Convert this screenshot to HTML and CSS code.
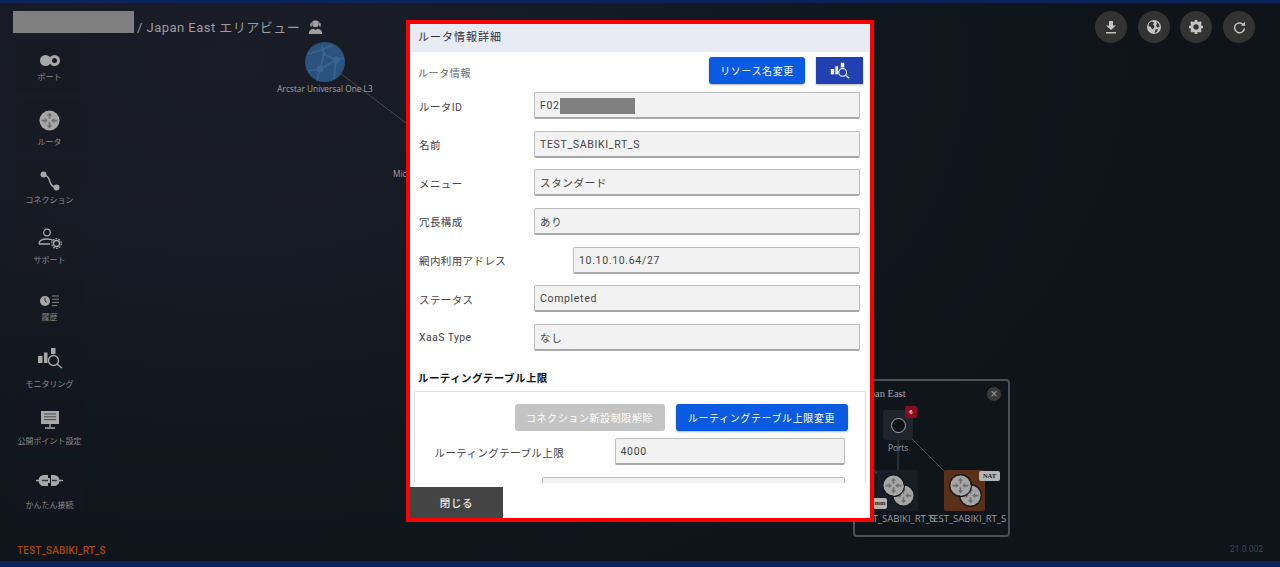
FILE: index.html
```html
<!DOCTYPE html>
<html lang="ja">
<head>
<meta charset="utf-8">
<title>Japan East エリアビュー</title>
<link rel="stylesheet" href="styles.css">
</head>
<body>
<svg class="defs" width="0" height="0" aria-hidden="true">
  <symbol id="router" viewBox="0 0 24 24">
    <circle cx="12" cy="12" r="11.5" fill="#a6a6a6"/>
    <g fill="#6f6f6f">
      <path d="M12 3l3 3.5h-2v3.5h-2V6.500H9z"/>
      <path d="M12 21l-3-3.500h2V14h2v3.500h2z"/>
      <path d="M10 12L6.500 9v2H3v2h3.500v2z"/>
      <path d="M14 12l3.500-3v2H21v2h-3.500v2z"/>
    </g>
  </symbol>
  <symbol id="monitor" viewBox="0 0 26 22">
    <rect x="1" y="9" width="4.500" height="7" fill="currentColor"/>
    <rect x="7" y="5.500" width="3.500" height="10.500" fill="currentColor"/>
    <rect x="14" y="1" width="4.500" height="6" fill="currentColor"/>
    <circle cx="16.500" cy="13.500" r="5" fill="none" stroke="currentColor" stroke-width="1.400"/>
    <path d="M20 17l5 4" stroke="currentColor" stroke-width="1.500"/>
  </symbol>
</svg>
<div class="topbar"></div>
<main class="stage">
  <div class="diagram">
    <svg class="links" width="1280" height="558" viewBox="0 0 1280 558">
      <path d="M340 70L406 120" stroke="#4a4a44" fill="none"/>
    </svg>
    <div class="cloud">
      <svg width="40" height="40" viewBox="0 0 40 40">
        <circle cx="20" cy="20" r="20" fill="#2b537e"/>
        <g stroke="#386592" stroke-width="1.600" fill="none">
          <path d="M3 12C12 10 20 7 28 3M15 27L19 12L31 18L15 27ZM15 27L12 39M31 18L39 16M19 12L17 3M31 18L29 37M3 29L15 27"/>
        </g>
        <g fill="#386592"><circle cx="15" cy="27" r="3.500"/><circle cx="31" cy="18" r="3.500"/><circle cx="19" cy="12" r="2"/></g>
      </svg>
      <span class="cloud-label">Arcstar Universal One L3</span>
    </div>
    <span class="ms-label">Microsoft Azure</span>

    <section class="minimap">
      <svg class="mini-links" width="156" height="157" viewBox="0 0 156 157">
        <path d="M45 59V100M52 53L106 107M20 89L38 110M14 84L36 108" stroke="#464b51" fill="none"/>
      </svg>
      <span class="mini-title">Japan East</span>
      <span class="mini-close">×</span>
      <div class="mini-ports"><i></i></div>
      <span class="mini-badge">6</span>
      <span class="mini-ports-label">Ports</span>
      <div class="mini-tile mini-tile-a"></div>
      <div class="mini-tile mini-tile-b"></div>
      <svg class="rt rt-a2"><use href="#router"/></svg>
      <svg class="rt rt-a1"><use href="#router"/></svg>
      <svg class="rt rt-b2"><use href="#router"/></svg>
      <svg class="rt rt-b1"><use href="#router"/></svg>
      <span class="tag tag-a">mm</span>
      <span class="tag tag-b">NAT</span>
      <span class="mini-label mini-label-a">TEST_SABIKI_RT_S</span>
      <span class="mini-label mini-label-b">TEST_SABIKI_RT_S</span>
    </section>
  </div>

  <header class="head">
    <div class="crumb">
      <span class="crumb-mask"></span>
      <h1 class="crumb-text">/ Japan East エリアビュー</h1>
      <svg class="crumb-icon" width="15" height="15" viewBox="0 0 15 15">
        <circle cx="7.500" cy="5" r="3.300" fill="#a0a0a0"/>
        <path d="M3 6C2.400 .6 12.600 .6 12 6" fill="none" stroke="#a0a0a0" stroke-width="1"/>
        <rect x="2.300" y="4.500" width="1.500" height="3" fill="#a0a0a0"/>
        <rect x="11.200" y="4.500" width="1.500" height="3" fill="#a0a0a0"/>
        <path d="M.8 15c0-3 1.500-5 4.700-5.200L7.500 11l2-1.200c3.200.2 4.700 2.200 4.700 5.200z" fill="#a0a0a0"/>
      </svg>
    </div>
    <div class="tools">
      <button class="tool" type="button" aria-label="ダウンロード">
        <svg width="14" height="14" viewBox="0 0 14 14"><path d="M5 1h4v4.500h3L7 10 2 5.500h3zM2 12h10v1.600H2z" fill="#c4c4c4"/></svg>
      </button>
      <button class="tool" type="button" aria-label="エリア">
        <svg width="16" height="16" viewBox="0 0 16 16"><circle cx="8" cy="8" r="7" fill="#c4c4c4"/><path d="M3 4l3-1.500 2 1-1 2 1.500 1.500-1 2.500-1.500 1L5 8 2.500 7zM10 2.500l3 2.500.5 3-2 .5-1.500-2 1-1.500zM9.500 10.500l2.500-.5-1 3-2.500 1z" fill="#333"/></svg>
      </button>
      <button class="tool" type="button" aria-label="設定">
        <svg width="16" height="16" viewBox="0 0 16 16"><circle cx="8" cy="8" r="4.200" fill="none" stroke="#c4c4c4" stroke-width="3"/><path d="M8 1v14M1 8h14M3 3l10 10M13 3L3 13" stroke="#c4c4c4" stroke-width="2.600" stroke-dasharray="2.600 8.800 2.600"/></svg>
      </button>
      <button class="tool" type="button" aria-label="更新">
        <svg width="13" height="13" viewBox="0 0 14 14"><path d="M11.500 4.500A5.300 5.300 0 1 0 12.300 8" fill="none" stroke="#c4c4c4" stroke-width="1.600"/><path d="M8.500 5h4.500V.7z" fill="#c4c4c4"/></svg>
      </button>
    </div>
  </header>

  <nav class="side">
    <a class="tile tile-port">
      <span class="tile-icon"><svg width="20" height="11" viewBox="0 0 20 11"><circle cx="5.500" cy="5.500" r="5.500" fill="#a8a8a8"/><circle cx="14.500" cy="5.500" r="4" fill="none" stroke="#a8a8a8" stroke-width="3"/></svg></span>
      <span class="tile-label">ポート</span>
    </a>
    <a class="tile tile-router">
      <span class="tile-icon"><svg width="21" height="21"><use href="#router"/></svg></span>
      <span class="tile-label">ルータ</span>
    </a>
    <a class="tile tile-conn">
      <span class="tile-icon"><svg width="20" height="20" viewBox="0 0 20 20"><circle cx="3.500" cy="3.500" r="3" fill="#a8a8a8"/><circle cx="16.500" cy="16.500" r="3" fill="#a8a8a8"/><path d="M4 4c5 1 5 4 6 7s3 5 6 5" fill="none" stroke="#a8a8a8" stroke-width="1.500"/></svg></span>
      <span class="tile-label">コネクション</span>
    </a>
    <a class="tile tile-support">
      <span class="tile-icon"><svg width="24" height="21" viewBox="0 0 24 21"><circle cx="9" cy="4.500" r="3.300" fill="none" stroke="#a8a8a8" stroke-width="1.200"/><path d="M1 16c0-3 3-5 8-5 3 0 5 .6 6 1.500M1 16h11" fill="none" stroke="#a8a8a8" stroke-width="1.300"/><circle cx="18.500" cy="15.500" r="3" fill="none" stroke="#a8a8a8" stroke-width="1.300"/><circle cx="18.500" cy="15.500" r="4.800" fill="none" stroke="#a8a8a8" stroke-width="1.200" stroke-dasharray="1.800 1.200"/></svg></span>
      <span class="tile-label">サポート</span>
    </a>
    <a class="tile tile-history">
      <span class="tile-icon"><svg width="20" height="12" viewBox="0 0 20 12"><circle cx="5" cy="6" r="5" fill="#a8a8a8"/><path d="M5 2.500V6l2 1.500" fill="none" stroke="#20242c"/><path d="M12 1h7M12 4.200h7M12 7.400h7M12 10.600h5" stroke="#888" stroke-width="1"/></svg></span>
      <span class="tile-label">履歴</span>
    </a>
    <a class="tile tile-monitor">
      <span class="tile-icon"><svg class="mon-side" width="26" height="22"><use href="#monitor"/></svg></span>
      <span class="tile-label">モニタリング</span>
    </a>
    <a class="tile tile-public">
      <span class="tile-icon"><svg width="20" height="19" viewBox="0 0 20 19"><path d="M1 1h18v13H1z" fill="#a8a8a8"/><path d="M4 4h12M4 6.800h12M4 9.600h12" stroke="#4a4a4a"/><path d="M10 14v3M5 18h10" stroke="#a8a8a8" stroke-width="1.400"/></svg></span>
      <span class="tile-label">公開ポイント設定</span>
    </a>
    <a class="tile tile-easy">
      <span class="tile-icon"><svg width="27" height="13" viewBox="0 0 27 13"><path d="M0 6.500h4M23 6.500h4" stroke="#a8a8a8" stroke-width="1.600"/><path d="M12 1H8a5.500 5.500 0 0 0 0 11h4v-3h2V4h-2zM15 1h3a5.500 5.500 0 0 1 0 11h-3z" fill="#a8a8a8"/><path d="M6 6.500h6M16 6.500h5" stroke="#33363e" stroke-width="1.400"/></svg></span>
      <span class="tile-label">かんたん接続</span>
    </a>
  </nav>

  <footer class="foot">
    <span class="selected">TEST_SABIKI_RT_S</span>
    <span class="version">21.0.002</span>
  </footer>

  <div class="modal" role="dialog" aria-label="ルータ情報詳細">
    <h2 class="modal-title">ルータ情報詳細</h2>
    <div class="modal-body">
      <div class="action-row">
        <span class="action-label">ルータ情報</span>
        <button class="btn btn-primary btn-rename" type="button">リソース名変更</button>
        <button class="btn btn-icon" type="button" aria-label="モニタリング"><svg width="20" height="17"><use href="#monitor"/></svg></button>
      </div>
      <div class="field"><label class="field-label">ルータID</label><div class="field-value">F02<span class="mask"></span></div></div>
      <div class="field"><label class="field-label">名前</label><div class="field-value">TEST_SABIKI_RT_S</div></div>
      <div class="field"><label class="field-label">メニュー</label><div class="field-value">スタンダード</div></div>
      <div class="field"><label class="field-label">冗長構成</label><div class="field-value">あり</div></div>
      <div class="field field-wide"><label class="field-label">網内利用アドレス</label><div class="field-value">10.10.10.64/27</div></div>
      <div class="field"><label class="field-label">ステータス</label><div class="field-value">Completed</div></div>
      <div class="field"><label class="field-label">XaaS Type</label><div class="field-value">なし</div></div>
      <h3 class="section-title">ルーティングテーブル上限</h3>
      <div class="section-box">
        <div class="section-actions">
          <button class="btn btn-disabled" type="button">コネクション新設制限解除</button>
          <button class="btn btn-primary btn-limit" type="button">ルーティングテーブル上限変更</button>
        </div>
        <div class="field field-limit"><label class="field-label">ルーティングテーブル上限</label><div class="field-value">4000</div></div>
        <div class="field field-next"><label class="field-label"></label><div class="field-value"></div></div>
      </div>
    </div>
    <div class="modal-foot"><button class="btn-close" type="button">閉じる</button></div>
  </div>
</main>
<div class="bottombar"></div>
</body>
</html>
```

FILE: styles.css
```css
* { box-sizing: border-box; }
html, body { height: 100%; }
body {
  margin: 0;
  display: flex;
  flex-direction: column;
  overflow: hidden;
  background: #0e141a;
  font-family: Roboto, "Noto Sans CJK JP", sans-serif;
  color: #333;
}
.defs { position: absolute; }
.topbar { height: 3px; background: #0a2358; flex: none; }
.bottombar { height: 6px; background: #0a2358; flex: none; }
.stage {
  flex: 1;
  position: relative;
  display: flex;
  flex-direction: column;
  min-height: 0;
  padding-top: 8px;
  background:
    radial-gradient(ellipse 900px 560px at 230px 60px, #1a1d28 0%, #161a24 35%, #12181f 60%, #0e141a 100%),
    #0e141a;
}

/* header */
.head {
  height: 28px;
  display: flex;
  justify-content: space-between;
  align-items: flex-start;
  padding: 0 25px 0 13px;
}
.crumb { display: flex; align-items: center; height: 22px; position: relative; z-index: 1; }
.crumb-mask { width: 121px; height: 22px; background: #808080; }
.crumb-text {
  margin: 8px 0 0 3px;
  font-size: 13px;
  font-weight: 400;
  letter-spacing: .47px;
  color: #9c9c9c;
  white-space: nowrap;
}
.crumb-icon { margin: 8px 0 0 8px; }
.tools { display: flex; gap: 10.67px; position: relative; z-index: 1; }
.tool {
  width: 32px;
  height: 32px;
  padding: 0;
  border: 0;
  border-radius: 50%;
  background: #333;
  display: flex;
  align-items: center;
  justify-content: center;
}

/* sidebar */
.side {
  width: 67px;
  margin-left: 16px;
  display: flex;
  flex-direction: column;
  gap: 7px;
  position: relative;
  z-index: 1;
}
.tile {
  height: 53px;
  padding-top: 6px;
  display: flex;
  flex-direction: column;
  align-items: center;
  background: #181a23;
  border-radius: 2px;
  color: #8a8a8a;
}
.tile-icon { height: 31px; display: flex; align-items: center; justify-content: center; flex: none; }
.tile-label { font-size: 8px; line-height: 10px; white-space: nowrap; letter-spacing: 0; }
.tile-port .tile-label, .tile-history .tile-label { margin-top: -3px; }
.tile-router .tile-label { margin-top: 2px; }
.tile-monitor .tile-label { margin-top: 4px; }
.tile-public .tile-label { margin-top: 1px; }
.tile-easy .tile-label { margin-top: 5px; }
.tile-history { background: #141821; }
.tile-monitor { background: #13171f; }
.tile-public { background: #13161e; }
.tile-easy { background: #13161e; }
.tile-support .tile-icon { transform: translateY(-2px); }
.tile-monitor .tile-icon { transform: translateY(-3px); }
.tile-public .tile-icon { transform: translateY(-1px); }
.mon-side { color: #a8a8a8; }

/* footer */
.foot {
  margin-top: auto;
  height: 17px;
  padding: 0 17px;
  display: flex;
  justify-content: space-between;
  align-items: flex-start;
}
.selected { font-size: 10px; font-weight: 500; line-height: 14px; letter-spacing: .15px; color: #a8480f; }
.version { font-size: 8.500px; line-height: 14px; margin-top: -2px; color: #42464b; }

/* free canvas behind the dialog */
.diagram { position: absolute; inset: 0; }
.links { position: absolute; left: 0; top: 0; }
.cloud {
  position: absolute;
  left: 265px;
  top: 39px;
  width: 120px;
  display: flex;
  flex-direction: column;
  align-items: center;
}
.cloud-label {
  margin-top: 1px;
  font: 8.300px/12px "Open Sans", sans-serif;
  color: #a2a2a2;
  white-space: nowrap;
}
.ms-label {
  position: absolute;
  left: 393px;
  top: 165px;
  width: 13px;
  overflow: hidden;
  font: 8.300px/12px "Open Sans", sans-serif;
  color: #a2a2a2;
  white-space: nowrap;
}
.minimap {
  position: absolute;
  left: 853px;
  top: 376px;
  width: 157px;
  height: 158px;
  border: 2px solid #4c5054;
  border-radius: 4px;
  background: #0f151b;
}
.mini-links { position: absolute; left: -2px; top: -2px; }
.mini-title {
  position: absolute;
  left: 6px;
  top: 7px;
  font: 10.500px/12px "Liberation Serif", serif;
  color: #a6a6a6;
  white-space: nowrap;
}
.mini-close {
  position: absolute;
  left: 132px;
  top: 6px;
  width: 14px;
  height: 14px;
  border-radius: 50%;
  background: #3a3a3a;
  color: #a0a0a0;
  font: 12px/14px "Liberation Sans", sans-serif;
  text-align: center;
}
.mini-ports {
  position: absolute;
  left: 28px;
  top: 29px;
  width: 30px;
  height: 30px;
  border-radius: 3px;
  background: #20252d;
  display: flex;
  align-items: center;
  justify-content: center;
}
.mini-ports i {
  width: 15px;
  height: 15px;
  border-radius: 50%;
  border: 1.500px solid #a8a8a8;
  background: #0f1318;
}
.mini-badge {
  position: absolute;
  left: 50px;
  top: 25px;
  width: 12px;
  height: 12px;
  border-radius: 2px;
  background: #8b0c22;
  color: #ddd;
  font: 700 6px/12px "Liberation Sans", sans-serif;
  text-align: center;
}
.mini-ports-label {
  position: absolute;
  left: 33px;
  top: 61px;
  font: 8.300px/12px "Open Sans", sans-serif;
  color: #a4a4a4;
}
.mini-tile { position: absolute; top: 89px; width: 41px; height: 41px; border-radius: 2px; }
.mini-tile-a { left: 22px; background: #191d25; }
.mini-tile-b { left: 89px; background: #5b3019; }
.rt { position: absolute; width: 21px; height: 21px; border-radius: 50%; box-shadow: 0 0 0 1px #14181e; }
.rt-a1 { left: 28px; top: 94px; }
.rt-a2 { left: 38px; top: 104px; }
.rt-b1 { left: 95px; top: 94px; }
.rt-b2 { left: 105px; top: 104px; }
.tag {
  position: absolute;
  height: 10px;
  border-radius: 2px;
  background: #b4b4b4;
  color: #222;
  font: 700 6.500px/10px "Liberation Serif", serif;
  text-align: center;
}
.tag-a { left: 18px; top: 117px; width: 14px; height: 11px; }
.tag-b { left: 124px; top: 90px; width: 21px; }
.mini-label {
  position: absolute;
  top: 132px;
  font: 9.500px/12px "Open Sans", sans-serif;
  color: #9c9c9c;
  white-space: nowrap;
}
.mini-label-a { left: 2px; }
.mini-label-b { left: 73px; }

/* dialog */
.modal {
  position: absolute;
  left: 406px;
  top: 17px;
  width: 468px;
  height: 502px;
  z-index: 5;
  border: 4px solid #f00;
  background: #fff;
  display: flex;
  flex-direction: column;
}
.modal-title {
  flex: none;
  height: 28px;
  margin: 0 1px;
  padding-left: 7px;
  background: #e8eaf4;
  font-size: 11px;
  font-weight: 400;
  line-height: 28px;
  letter-spacing: 1px;
  color: #333;
}
.modal-body {
  flex: none;
  height: 431px;
  overflow: hidden;
  padding: 5px 7px 0 9px;
  display: flex;
  flex-direction: column;
  gap: 11.670px;
}
.action-row { display: flex; align-items: center; height: 27px; margin-bottom: -3.670px; flex: none; }
.action-label { font-size: 10px; letter-spacing: .6px; color: #666; margin: 4px auto 0 -1px; }
.btn {
  height: 27px;
  padding: 0;
  border: 0;
  border-radius: 3px;
  font-family: inherit;
  font-size: 10px;
  letter-spacing: .6px;
  color: #fff;
  white-space: nowrap;
  flex: none;
}
.btn-primary { background: #0b5be2; box-shadow: 0 1px 2px rgba(0,0,0,.3); }
.btn-rename { width: 96px; }
.btn-icon {
  width: 47px;
  margin-left: 11px;
  border-radius: 0;
  background: #2141b2;
  box-shadow: 0 1px 2px rgba(0,0,0,.3);
  display: flex;
  align-items: center;
  justify-content: center;
}
.field { display: flex; align-items: center; height: 27px; flex: none; margin-right: 3px; }
.field-label {
  width: 115px;
  flex: none;
  padding-top: 1px;
  font-size: 10.500px;
  letter-spacing: .4px;
  color: #444;
  white-space: nowrap;
}
.field-wide .field-label { width: 154px; }
.field-value {
  flex: 1;
  height: 27px;
  display: flex;
  align-items: center;
  padding: 1px 0 0 5px;
  background: #f2f2f2;
  border: 1px solid #bdbdbd;
  border-bottom: 2px solid #a8a8a8;
  border-radius: 2px;
  font-size: 10.500px;
  letter-spacing: .67px;
  color: #444;
  white-space: nowrap;
}
.mask { width: 75px; height: 16px; background: #808080; }
.section-title {
  flex: none;
  margin: 9px 0 -6px -1px;
  font-size: 10.500px;
  font-weight: 700;
  line-height: 14px;
  letter-spacing: .42px;
  color: #111;
}
.section-box {
  flex: none;
  margin: 0 -3px 0 -5px;
  height: 140px;
  padding: 12px 20.500px 0 18.500px;
  border: 1.500px solid #dcdcdc;
  border-radius: 2px;
  display: flex;
  flex-direction: column;
}
.section-actions { display: flex; justify-content: flex-end; gap: 11px; margin-right: -3px; flex: none; }
.btn-disabled { width: 150px; background: #c4c4c4; }
.btn-limit { width: 172px; }
.field-limit { margin: 7px 0 0 0; }
.field-limit .field-label { width: 181px; padding-left: 1px; }
.field-next { margin: 11.500px 0 0 0; }
.field-next .field-label { width: 108px; }
.modal-foot { flex: 1; display: flex; align-items: flex-end; }
.btn-close {
  width: 93px;
  height: 31px;
  padding: 0;
  border: 0;
  background: #444;
  color: #ececec;
  font-family: inherit;
  font-size: 10.500px;
  font-weight: 500;
  letter-spacing: .6px;
}
```
